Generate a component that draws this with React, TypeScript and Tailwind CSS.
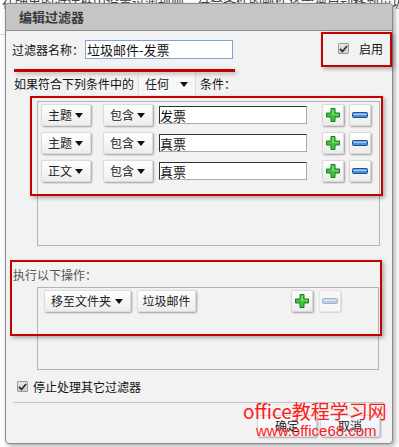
import React from "react";

const cjk = { fontFamily: '"Noto Sans CJK SC", "Noto Sans", sans-serif' };

const Caret = () => (
  <svg width="8" height="5" viewBox="0 0 8 5" className="shrink-0">
    <path d="M0 0 L8 0 L4 5 Z" fill="#111" />
  </svg>
);

const PlusIcon = () => (
  <svg width="14" height="14" viewBox="0 0 14 14">
    <path
      d="M5 0.5 H9 V5 H13.5 V9 H9 V13.5 H5 V9 H0.5 V5 H5 Z"
      fill="#3cc43c"
      stroke="#1f7a1f"
      strokeWidth="1"
      strokeLinejoin="round"
    />
    <path d="M6 1.5 H8 V6 H12.5 V7 H6 Z" fill="#8fe88f" opacity="0.6" />
  </svg>
);

const MinusIcon = ({ disabled }: { disabled?: boolean }) => (
  <svg width="16" height="6" viewBox="0 0 16 6">
    <rect
      x="0.5"
      y="0.5"
      width="15"
      height="5"
      rx="1"
      fill={disabled ? "#b9cce6" : "#4a8fdc"}
      stroke={disabled ? "#9fb4d2" : "#1d4f91"}
    />
    <rect x="1.5" y="1.5" width="13" height="1.5" fill={disabled ? "#dde7f4" : "#9cc6f2"} />
  </svg>
);

const DropButton = ({ label, w }: { label: string; w: string }) => (
  <div
    className={`${w} h-[22px] shrink-0 flex items-center justify-between pl-[6px] pr-[7px] text-[12px] text-[#222] bg-gradient-to-b from-white to-[#ededed] border border-[#dcdcdc] rounded-[2px] shadow-[1px_1px_2px_rgba(0,0,0,0.35)]`}
  >
    <span>{label}</span>
    <Caret />
  </div>
);

const IconButton = ({ children, faded }: { children: React.ReactNode; faded?: boolean }) => (
  <div
    className={`w-[22px] h-[22px] shrink-0 flex items-center justify-center rounded-[2px] border ${
      faded
        ? "border-[#e4e4e4] bg-[#f6f6f6] shadow-[1px_1px_1px_rgba(0,0,0,0.12)]"
        : "border-[#d8d8d8] bg-gradient-to-b from-white to-[#ececec] shadow-[1px_1px_2px_rgba(0,0,0,0.35)]"
    }`}
  >
    {children}
  </div>
);

const Check = () => (
  <div className="w-[11px] h-[11px] shrink-0 flex items-center justify-center border border-[#9a9a9a] bg-gradient-to-b from-[#e8e8e8] to-[#cfcfcf] rounded-[1px]">
    <svg width="9" height="8" viewBox="0 0 9 8">
      <path d="M1 4 L3.5 6.5 L8 1" fill="none" stroke="#333" strokeWidth="1.8" />
    </svg>
  </div>
);

const conditions = [
  { field: "主题", value: "发票" },
  { field: "主题", value: "真票" },
  { field: "正文", value: "真票" },
];

export default function App() {
  return (
    <div className="relative w-[399px] h-[447px] bg-white overflow-hidden" style={cjk}>
      {/* page text behind the dialog */}
      <div className="-mt-[8px] pl-[2px] whitespace-nowrap text-[13px] text-[#444]">
        在弹出的对话框中设置过滤规则，符合条件的邮件将会被自动移到垃圾邮件，操作后请确认保存。
      </div>
      <div className="w-[5px] h-px bg-[#d6d6d6] mt-[22px]" />

      {/* dialog */}
      <div className="absolute left-[5px] top-[3px] w-[388px] h-[441px] border border-[#8a8a8a] rounded-[4px] bg-[#f2f2f2] overflow-hidden shadow-[2px_2px_5px_rgba(0,0,0,0.35)] flex flex-col">
        <div className="h-[27px] shrink-0 bg-[#c5c5c5] border-b border-[#8c8c8c] flex items-center pl-[13px] text-[13px] font-bold text-[#3a3a3a]">
          编辑过滤器
        </div>

        {/* name + enable */}
        <div className="mt-[9px] h-[19px] flex items-center">
          <span className="pl-[6px] w-[78px] text-[12px] text-[#111]">过滤器名称：</span>
          <div className="ml-[1px] w-[148px] h-[19px] border border-[#7fa2d8] bg-white flex items-center pl-[1px] text-[13px] text-[#111]">
            垃圾邮件-发票
          </div>
          <div className="ml-auto mr-[9px] flex items-center gap-[10px] -mt-[2px]">
            <Check />
            <span className="text-[12px] text-[#111]">启用</span>
          </div>
        </div>

        {/* conditions header */}
        <div className="mt-[14px] h-[22px] flex items-center">
          <span className="pl-[8px] text-[12px] text-[#111]">如果符合下列条件中的</span>
          <div className="ml-[4px] w-[58px] h-[22px] flex items-center justify-between pl-[6px] pr-[7px] bg-[#f7f7f7] border-x border-[#dddddd] text-[12px] text-[#222]">
            <span>任何</span>
            <Caret />
          </div>
          <span className="ml-[4px] text-[12px] text-[#111]">条件：</span>
        </div>

        {/* conditions box */}
        <div className="mt-[6px] ml-[31px] w-[343px] h-[145px] border border-[#b4b4b4] pt-[2px] pl-[3px] flex flex-col gap-[6px]">
          {conditions.map((c, i) => (
            <div key={i} className="flex items-center h-[22px]">
              <DropButton label={c.field} w="w-[50px]" />
              <div className="ml-[12px]">
                <DropButton label="包含" w="w-[50px]" />
              </div>
              <div className="ml-[6px] w-[148px] h-[18px] bg-white border border-[#a8a8a8] border-t-[#333] border-l-[#333] flex items-center text-[13px] text-[#111] leading-none">
                {c.value}
              </div>
              <div className="ml-[15px]">
                <IconButton>
                  <PlusIcon />
                </IconButton>
              </div>
              <div className="ml-[5px]">
                <IconButton>
                  <MinusIcon />
                </IconButton>
              </div>
            </div>
          ))}
        </div>

        {/* actions */}
        <div className="mt-[20px] h-[18px] flex items-center pl-[7px] text-[12px] text-[#555]">执行以下操作：</div>
        <div className="mt-[3px] ml-[31px] w-[342px] h-[83px] border border-[#b4b4b4] pt-[2px] pl-[6px]">
          <div className="flex items-center h-[22px]">
            <DropButton label="移至文件夹" w="w-[87px]" />
            <div className="ml-[6px] w-[59px] h-[22px] flex items-center justify-center text-[12px] text-[#222] bg-gradient-to-b from-white to-[#ededed] border border-[#dcdcdc] rounded-[2px] shadow-[1px_1px_2px_rgba(0,0,0,0.35)]">
              垃圾邮件
            </div>
            <div className="ml-[95px]">
              <IconButton>
                <PlusIcon />
              </IconButton>
            </div>
            <div className="ml-[6px]">
              <IconButton faded>
                <MinusIcon disabled />
              </IconButton>
            </div>
          </div>
        </div>

        {/* stop processing */}
        <div className="mt-[8px] h-[17px] flex items-center gap-[5px] pl-[11px]">
          <Check />
          <span className="text-[12px] text-[#111]">停止处理其它过滤器</span>
        </div>

        <div className="mt-[7px] ml-[7px] mr-[8px] h-px bg-[#c4c4c4]" />

        <div className="mt-[12px] flex justify-end gap-[3px] pr-[12px]">
          <div className="w-[60px] h-[22px] flex items-center justify-center text-[12px] text-[#222] bg-gradient-to-b from-white to-[#eef2f7] border border-[#d6d6d6] rounded-[2px] shadow-[1px_1px_2px_rgba(0,0,0,0.3)]">
            确定
          </div>
          <div className="w-[60px] h-[22px] flex items-center justify-center text-[12px] text-[#222] bg-gradient-to-b from-[#f8fbff] to-[#e6eef8] border border-[#d6d6d6] rounded-[2px] shadow-[1px_1px_2px_rgba(0,0,0,0.3)]">
            取消
          </div>
        </div>
      </div>

      {/* red annotation marks */}
      <div className="absolute left-[321px] top-[32px] w-[71px] h-[35px] border-2 border-[#c40000] shadow-[2px_2px_4px_rgba(0,0,0,0.3)]" />
      <div className="absolute left-[14px] top-[69px] w-[221px] h-[3px] bg-[#c40000] shadow-[2px_2px_4px_rgba(0,0,0,0.3)]" />
      <div className="absolute left-[30px] top-[96px] w-[353px] h-[100px] border-2 border-[#c40000] shadow-[2px_2px_4px_rgba(0,0,0,0.3)]" />
      <div className="absolute left-[10px] top-[260px] w-[372px] h-[76px] border-2 border-[#c40000] shadow-[2px_2px_4px_rgba(0,0,0,0.3)]" />

      {/* watermark */}
      <div className="absolute left-[243px] top-[399px] text-[19px] leading-[24px] text-[#ff1a1a] whitespace-nowrap">
        office教程学习网
      </div>
      <div
        className="absolute left-[256px] top-[422px] text-[15px] leading-[18px] text-[#ff1a1a] whitespace-nowrap"
        style={{ fontFamily: '"Liberation Sans", Arial, sans-serif' }}
      >
        www.office68.com
      </div>
    </div>
  );
}
